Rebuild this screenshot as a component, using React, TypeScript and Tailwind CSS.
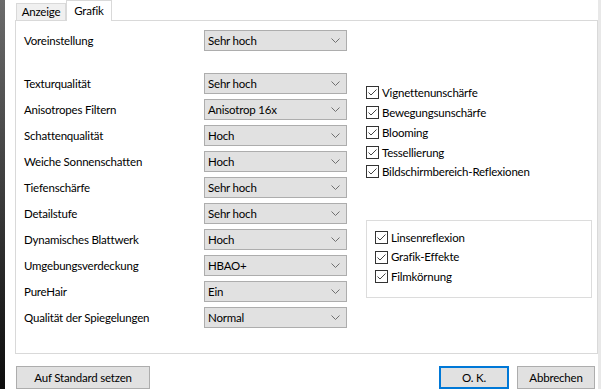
import React from 'react';

const rows: [string, string][] = [
  ['Texturqualität', 'Sehr hoch'],
  ['Anisotropes Filtern', 'Anisotrop 16x'],
  ['Schattenqualität', 'Hoch'],
  ['Weiche Sonnenschatten', 'Hoch'],
  ['Tiefenschärfe', 'Sehr hoch'],
  ['Detailstufe', 'Sehr hoch'],
  ['Dynamisches Blattwerk', 'Hoch'],
  ['Umgebungsverdeckung', 'HBAO+'],
  ['PureHair', 'Ein'],
  ['Qualität der Spiegelungen', 'Normal'],
];

const effects = ['Vignettenunschärfe', 'Bewegungsunschärfe', 'Blooming', 'Tessellierung', 'Bildschirmbereich-Reflexionen'];
const extras = ['Linsenreflexion', 'Grafik-Effekte', 'Filmkörnung'];

function Select({ value }: { value: string }) {
  return (
    <div className="w-[143px] h-[21px] flex items-center justify-between pl-[3px] pr-[5px] bg-[#e1e1e1] border border-[#adadad]">
      <span>{value}</span>
      <svg width="9" height="5" viewBox="0 0 9 5" className="mr-[1px]">
        <polyline points="0.5,0.5 4.5,4.5 8.5,0.5" fill="none" stroke="#707070" strokeWidth="1" />
      </svg>
    </div>
  );
}

function Check({ label, h }: { label: string; h: string }) {
  return (
    <div className={`flex items-center gap-[3px] ${h}`}>
      <div className="w-[13px] h-[13px] border border-[#333] bg-white flex items-center justify-center">
        <svg width="11" height="11" viewBox="0 0 11 11">
          <polyline points="1.5,5.5 4,8 9.5,2.5" fill="none" stroke="#444" strokeWidth="1" />
        </svg>
      </div>
      <span>{label}</span>
    </div>
  );
}

function Button({ children, w, primary }: { children: React.ReactNode; w: string; primary?: boolean }) {
  return (
    <div
      className={`${w} h-[23px] flex items-center justify-center bg-[#e1e1e1] ${
        primary ? 'border-2 border-[#0078d7]' : 'border border-[#adadad]'
      }`}
    >
      {children}
    </div>
  );
}

export default function App() {
  return (
    <div
      className="w-[604px] h-[389px] flex bg-white text-[11.5px] tracking-[-0.2px] text-black overflow-hidden"
      style={{ fontFamily: 'Lato, "Noto Sans", sans-serif' }}
    >
      {/* background window edge */}
      <div className="w-[5px] h-full bg-gradient-to-b from-[#6b6b6b] via-[#3c3c3c] to-[#0d0d0d]" />

      <div className="w-[593px] flex flex-col pl-[10px]">
        {/* Tabs */}
        <div className="h-[20px] flex items-end pl-[1px]">
          <div className="h-[17px] w-[50px] flex items-center justify-center bg-[#f0f0f0] border border-b-0 border-[#d9d9d9]">
            Anzeige
          </div>
          <div className="relative z-10 h-[21px] -mb-[1px] w-[46px] flex items-start pt-[1px] justify-center bg-white border border-b-0 border-[#d9d9d9]">
            Grafik
          </div>
        </div>

        {/* Panel */}
        <div className="w-[583px] h-[336px] border border-[#d9d9d9] bg-white flex flex-col pl-[8px] pt-[9px]">
          <div className="flex items-center h-[21px]">
            <span className="w-[180px]">Voreinstellung</span>
            <Select value="Sehr hoch" />
          </div>

          <div className="flex mt-[22px]">
            <div className="flex flex-col gap-[5px]">
              {rows.map(([label, value]) => (
                <div key={label} className="flex items-center h-[21px]">
                  <span className="w-[180px]">{label}</span>
                  <Select value={value} />
                </div>
              ))}
            </div>

            <div className="flex flex-col ml-[19px] pt-[10px]">
              {effects.map((e) => (
                <Check key={e} label={e} h="h-[19.75px]" />
              ))}
              <div className="mt-[38px] w-[226px] h-[78px] border border-[#dcdcdc] pl-[8px] pt-[7px] flex flex-col">
                {extras.map((e) => (
                  <Check key={e} label={e} h="h-[19.5px]" />
                ))}
              </div>
            </div>
          </div>
        </div>

        {/* Buttons */}
        <div className="flex items-start mt-[12px] pl-[1px]">
          <Button w="w-[134px]">Auf Standard setzen</Button>
          <div className="flex-1" />
          <Button w="w-[70px]" primary>
            O. K.
          </Button>
          <div className="w-[8px]" />
          <Button w="w-[78px]">Abbrechen</Button>
          <div className="w-[3px]" />
        </div>
      </div>

      <div className="w-[3px] h-full bg-[#e8e8e8]" />
    </div>
  );
}
